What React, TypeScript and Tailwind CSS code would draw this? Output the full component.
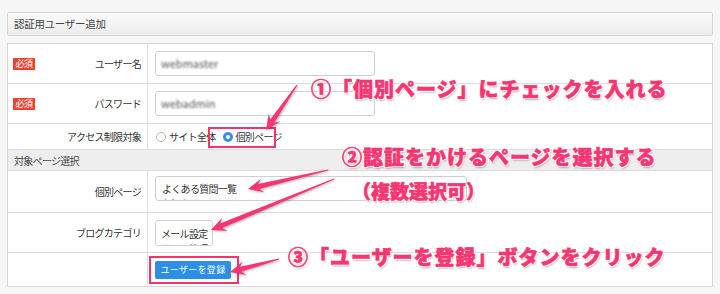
import React from "react";

const PINK = "#f53672";

type Arrow = { x1: number; y1: number; x2: number; y2: number };

const arrows: Arrow[] = [
  { x1: 297, y1: 85, x2: 266, y2: 130 },
  { x1: 328, y1: 170, x2: 248, y2: 189 },
  { x1: 334, y1: 179, x2: 211, y2: 230 },
  { x1: 279, y1: 259, x2: 230, y2: 272 },
];

function arrowPoints({ x1, y1, x2, y2 }: Arrow) {
  const headLen = 15;
  const headW = 14;
  const shaftW = 5;
  const dx = x2 - x1;
  const dy = y2 - y1;
  const len = Math.hypot(dx, dy);
  const ux = dx / len;
  const uy = dy / len;
  const nx = -uy;
  const ny = ux;
  const bx = x2 - ux * headLen;
  const by = y2 - uy * headLen;
  const nb = x2 - ux * (headLen - 4);
  const nby = y2 - uy * (headLen - 4);
  const p = (x: number, y: number) => `${x.toFixed(1)},${y.toFixed(1)}`;
  return [
    p(x1 + nx * 0.6, y1 + ny * 0.6),
    p(nb + (nx * shaftW) / 2, nby + (ny * shaftW) / 2),
    p(bx + (nx * headW) / 2, by + (ny * headW) / 2),
    p(x2, y2),
    p(bx - (nx * headW) / 2, by - (ny * headW) / 2),
    p(nb - (nx * shaftW) / 2, nby - (ny * shaftW) / 2),
    p(x1 - nx * 0.6, y1 - ny * 0.6),
  ].join(" ");
}

const Badge = () => (
  <span className="inline-flex items-center justify-center w-[22px] h-[12px] bg-[#ea4430] text-white text-[9px] tracking-[-0.5px] leading-none">
    必須
  </span>
);

const annoClass =
  "absolute leading-none font-black text-[#f53672] whitespace-nowrap [-webkit-text-stroke:0.6px_#f53672] [text-shadow:0_0_1px_#fff,0_0_2px_#fff,1px_1px_0_#fff,-1px_-1px_0_#fff,1px_-1px_0_#fff,-1px_1px_0_#fff,1px_2px_2px_rgba(0,0,0,0.3)]";

export default function App() {
  return (
    <div className="relative w-[720px] h-[294px] overflow-hidden bg-[#f7f7f7] pt-3 px-[7px] font-['Noto_Sans_CJK_JP','Noto_Sans',sans-serif] text-[#333]">
      <div className="h-6 border border-[#d6d6d6] rounded-[2px] bg-gradient-to-b from-[#fbfbfb] to-[#ececec] flex items-center px-[6px] text-[10.5px] tracking-[-0.3px] text-[#444]">
        認証用ユーザー追加
      </div>

      <div className="mt-[7px] border border-[#d6d6d6] bg-white text-[10px] tracking-[-0.7px]">
        <div className="grid grid-cols-[140px_1fr] h-[40px] border-b border-[#dcdcdc]">
          <div className="flex items-center justify-between pl-[5px] pr-[6px] border-r border-[#dcdcdc]">
            <Badge />
            <span>ユーザー名</span>
          </div>
          <div className="flex items-center pl-[7px]">
            <div className="w-[220px] h-[25px] border border-[#d0d0d0] rounded-[3px] flex items-center px-[5px]">
              <span className="text-[#555] text-[11px] tracking-normal blur-[1.2px]">webmaster</span>
            </div>
          </div>
        </div>

        <div className="grid grid-cols-[140px_1fr] h-[40px] border-b border-[#dcdcdc]">
          <div className="flex items-center justify-between pl-[5px] pr-[6px] border-r border-[#dcdcdc]">
            <Badge />
            <span>パスワード</span>
          </div>
          <div className="flex items-center pl-[7px]">
            <div className="w-[220px] h-[25px] border border-[#d0d0d0] rounded-[3px] flex items-center px-[5px]">
              <span className="text-[#555] text-[11px] tracking-normal blur-[1.2px]">webadmin</span>
            </div>
          </div>
        </div>

        <div className="grid grid-cols-[140px_1fr] h-[26px] border-b border-[#dcdcdc]">
          <div className="flex items-center justify-end pr-[6px] border-r border-[#dcdcdc]">
            アクセス制限対象
          </div>
          <div className="flex items-center pl-[8px] gap-[3px]">
            <span className="w-[10px] h-[10px] rounded-full border border-[#b5b5b5] bg-white" />
            <span className="mr-[4px]">サイト全体</span>
            <span className="w-[10px] h-[10px] rounded-full bg-[#3c8cf0] flex items-center justify-center">
              <span className="w-[4px] h-[4px] rounded-full bg-white" />
            </span>
            <span>個別ページ</span>
          </div>
        </div>

        <div className="h-[21px] border-b border-[#dcdcdc] bg-[#eeeeee] flex items-center pl-[6px] text-[#444]">
          対象ページ選択
        </div>

        <div className="grid grid-cols-[140px_1fr] h-[42px] border-b border-[#dcdcdc]">
          <div className="flex items-center justify-end pr-[6px] border-r border-[#dcdcdc]">
            個別ページ
          </div>
          <div className="flex items-start pt-[5px] pl-[7px]">
            <div className="w-[312px] h-[25px] border border-[#d0d0d0] rounded-[3px] overflow-hidden px-[6px] pt-[4px] leading-[15px]">
              <div>よくある質問一覧</div>
              <div>お知らせ</div>
            </div>
          </div>
        </div>

        <div className="grid grid-cols-[140px_1fr] h-[40px] border-b border-[#dcdcdc]">
          <div className="flex items-center justify-end pr-[6px] border-r border-[#dcdcdc]">
            ブログカテゴリ
          </div>
          <div className="flex items-center pl-[7px]">
            <div className="w-[58px] h-[26px] border border-[#d0d0d0] rounded-[3px] overflow-hidden pl-[5px] pr-[1px] pt-[5px] leading-[15px] whitespace-nowrap">
              <div>メール設定</div>
              <div>サイト管理</div>
            </div>
          </div>
        </div>

        <div className="grid grid-cols-[140px_1fr] h-[33px]">
          <div className="border-r border-[#dcdcdc]" />
          <div className="flex items-center pl-[7px]">
            <button className="w-[76px] h-[18px] rounded-[2px] bg-[#2b90e4] text-white text-[9px] tracking-[0.3px] leading-none whitespace-nowrap">
              ユーザーを登録
            </button>
          </div>
        </div>
      </div>

      <div className="absolute left-[208px] top-[127px] w-[68px] h-[21px] border-2 border-[#f0356f]" />
      <div className="absolute left-[149px] top-[256px] w-[90px] h-[28px] border-2 border-[#f0356f]" />

      <svg
        className="absolute left-0 top-0 [filter:drop-shadow(1px_1px_1px_rgba(0,0,0,0.3))]"
        width={720}
        height={294}
      >
        {arrows.map((a, i) => (
          <polygon key={i} points={arrowPoints(a)} fill={PINK} />
        ))}
      </svg>

      <div className={`${annoClass} left-[311px] top-[79px] text-[20px] tracking-[1px]`}>
        ①「個別ページ」にチェックを入れる
      </div>
      <div className={`${annoClass} left-[342px] top-[147px] text-[20px] tracking-[1px]`}>
        ②認証をかけるページを選択する
      </div>
      <div className={`${annoClass} left-[352px] top-[181px] text-[19px]`}>
        （複数選択可）
      </div>
      <div className={`${annoClass} left-[288px] top-[247px] text-[20px] tracking-[1px]`}>
        ③「ユーザーを登録」ボタンをクリック
      </div>
    </div>
  );
}
